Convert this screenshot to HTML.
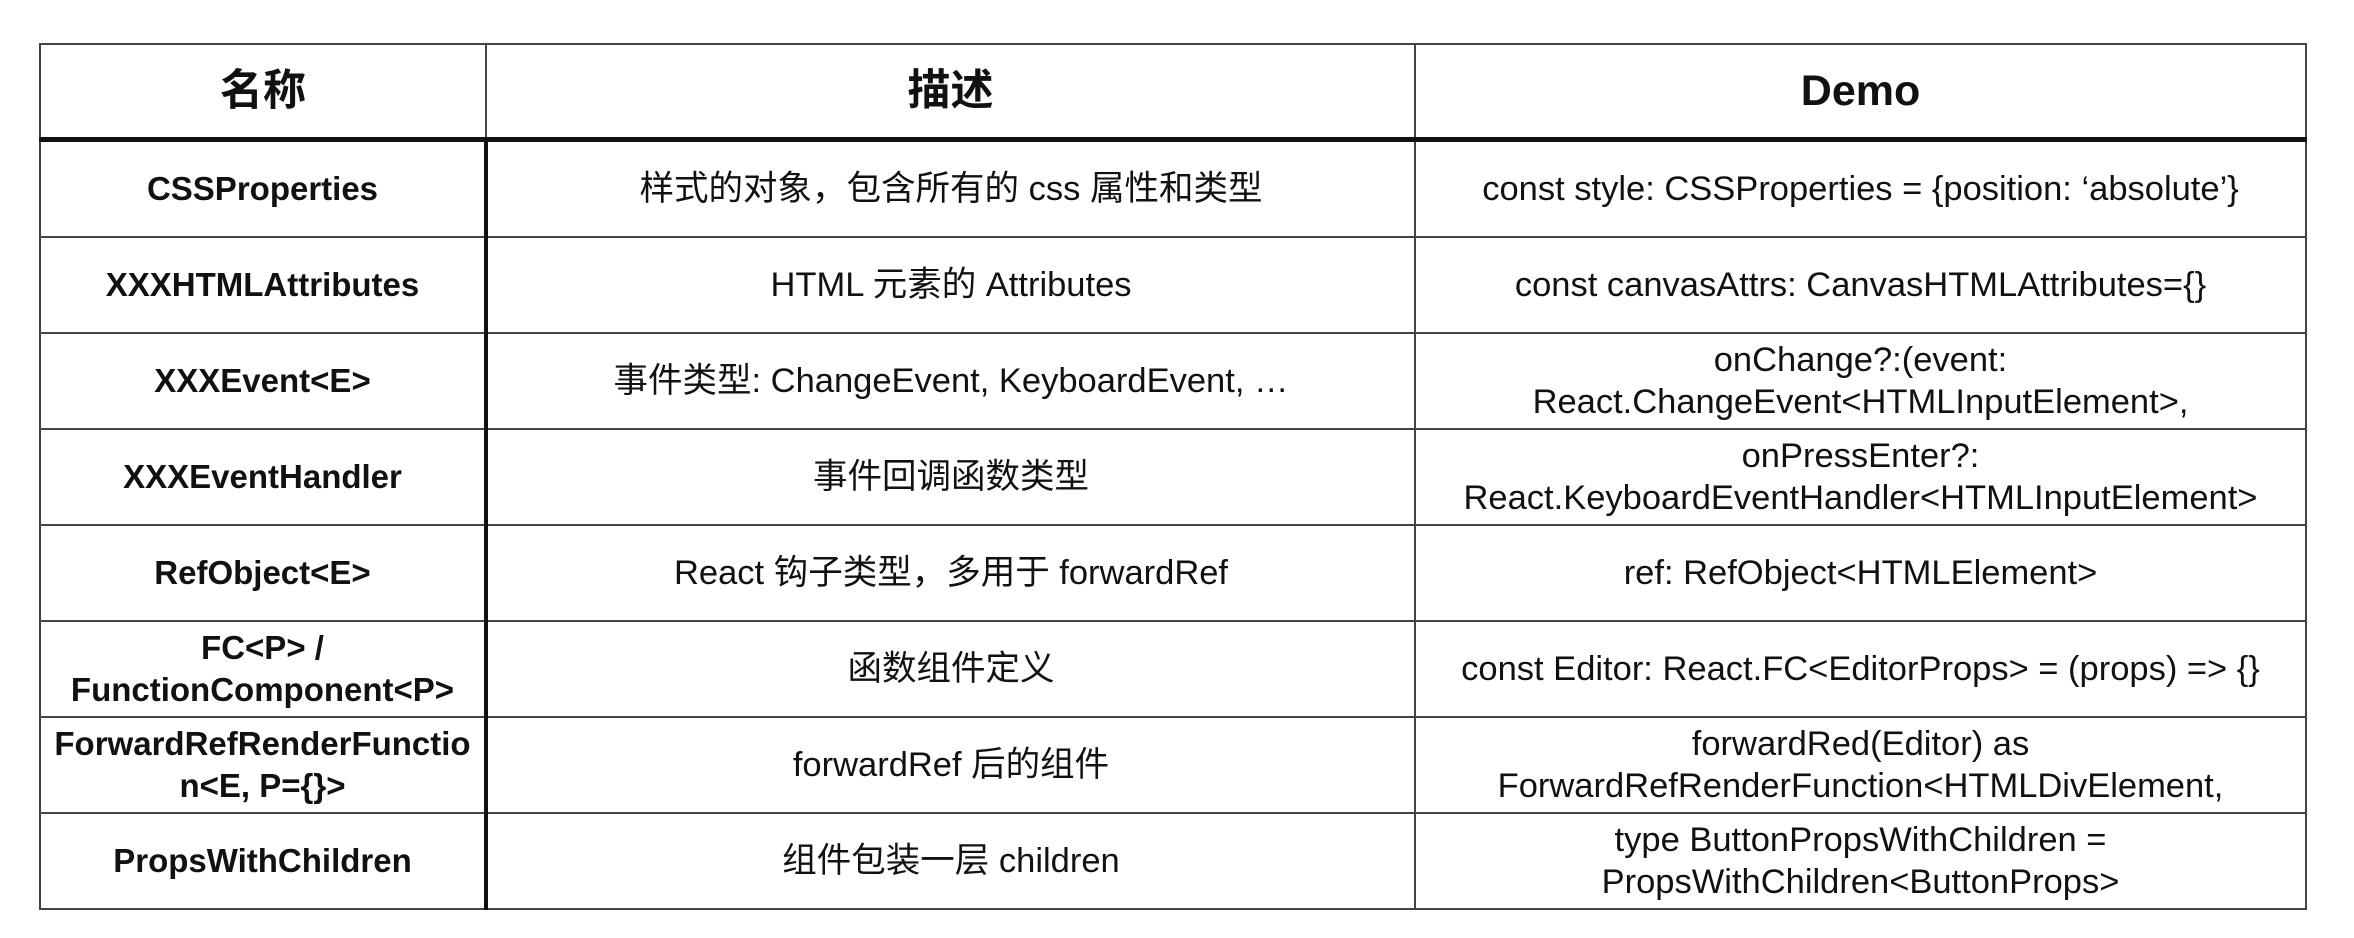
<!DOCTYPE html>
<html><head><meta charset="utf-8"><style>
html,body{margin:0;padding:0;background:#fff;width:2354px;height:938px;overflow:hidden}
table{position:absolute;left:39px;top:43px;border-collapse:collapse;table-layout:fixed;width:2266px;
font-family:"Liberation Sans","Noto Sans CJK SC",sans-serif;color:#111}
td,th{border:2px solid #444;text-align:center;vertical-align:middle;padding:0;height:94px;font-size:34.5px;line-height:42px;overflow:hidden;white-space:nowrap}
th{font-size:43px;font-weight:bold;border-bottom:5px solid #111;height:92px}
td.n{font-weight:bold;font-size:33px;border-right:4px solid #111}
</style></head><body>
<table>
<colgroup><col style="width:446px"><col style="width:929px"><col style="width:891px"></colgroup>
<tr><th>名称</th><th>描述</th><th>Demo</th></tr>
<tr><td class="n">CSSProperties</td><td>样式的对象，包含所有的 css 属性和类型</td><td>const style: CSSProperties = {position: ‘absolute’}</td></tr>
<tr><td class="n">XXXHTMLAttributes</td><td>HTML 元素的 Attributes</td><td>const canvasAttrs: CanvasHTMLAttributes={}</td></tr>
<tr><td class="n">XXXEvent&lt;E&gt;</td><td>事件类型: ChangeEvent, KeyboardEvent, …</td><td>onChange?:(event:<br>React.ChangeEvent&lt;HTMLInputElement&gt;,</td></tr>
<tr><td class="n">XXXEventHandler</td><td>事件回调函数类型</td><td>onPressEnter?:<br>React.KeyboardEventHandler&lt;HTMLInputElement&gt;</td></tr>
<tr><td class="n">RefObject&lt;E&gt;</td><td>React 钩子类型，多用于 forwardRef</td><td>ref: RefObject&lt;HTMLElement&gt;</td></tr>
<tr><td class="n">FC&lt;P&gt; /<br>FunctionComponent&lt;P&gt;</td><td>函数组件定义</td><td>const Editor: React.FC&lt;EditorProps&gt; = (props) =&gt; {}</td></tr>
<tr><td class="n">ForwardRefRenderFunctio<br>n&lt;E, P={}&gt;</td><td>forwardRef 后的组件</td><td>forwardRed(Editor) as<br>ForwardRefRenderFunction&lt;HTMLDivElement,</td></tr>
<tr><td class="n">PropsWithChildren</td><td>组件包装一层 children</td><td>type ButtonPropsWithChildren =<br>PropsWithChildren&lt;ButtonProps&gt;</td></tr>
</table>
</body></html>
